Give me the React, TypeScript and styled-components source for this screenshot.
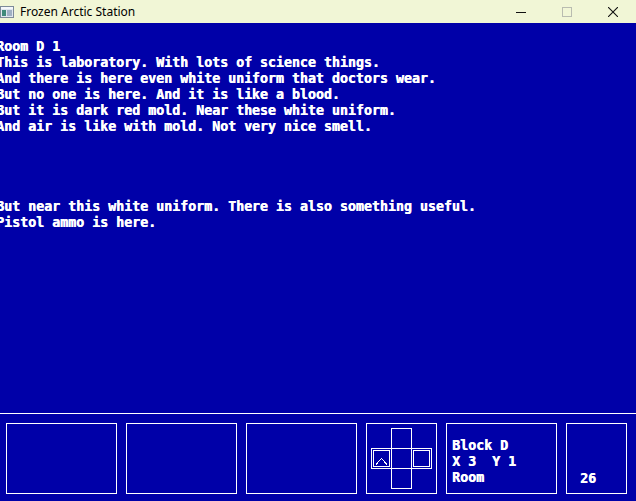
import React from "react";
import styled, { createGlobalStyle } from "styled-components";

const GlobalStyle = createGlobalStyle`
  html, body {
    margin: 0;
    padding: 0;
    overflow: hidden;
  }
`;

const storyLines = [
  "Room D 1",
  "This is laboratory. With lots of science things.",
  "And there is here even white uniform that doctors wear.",
  "But no one is here. And it is like a blood.",
  "But it is dark red mold. Near these white uniform.",
  "And air is like with mold. Not very nice smell.",
  "",
  "",
  "",
  "",
  "But near this white uniform. There is also something useful.",
  "Pistol ammo is here.",
];

const WindowIcon: React.FC = () => (
  <svg width="14" height="12" viewBox="0 0 14 12">
    <rect x="0.5" y="0.5" width="13" height="11" fill="#dfe6ee" stroke="#7d8a99" />
    <rect x="1" y="1" width="12" height="2" fill="#f4f7fb" />
    <rect x="2" y="4" width="4" height="6" fill="#3f8a7a" />
    <rect x="7" y="4" width="5" height="6" fill="#9fb0c4" />
  </svg>
);

const DPad: React.FC = () => (
  <svg width="69" height="69" viewBox="0 0 69 69" shapeRendering="crispEdges">
    <g fill="none" stroke="#fff" strokeWidth="1">
      <rect x="24.5" y="4.5" width="20" height="60" />
      <rect x="4.5" y="24.5" width="60" height="20" />
      <rect x="6.5" y="26.5" width="16" height="16" />
      <rect x="46.5" y="26.5" width="16" height="16" />
      <polyline points="9,40.5 14.5,34.5 20,40.5" />
    </g>
  </svg>
);

export default function App() {
  return (
    <>
      <GlobalStyle />
      <Window>
        <TitleBar>
          <IconSlot>
            <WindowIcon />
          </IconSlot>
          <Title>Frozen Arctic Station</Title>
          <Controls>
            <CtrlButton>
              <svg width="10" height="10" viewBox="0 0 10 10">
                <line x1="0" y1="5.5" x2="10" y2="5.5" stroke="#111" />
              </svg>
            </CtrlButton>
            <CtrlButton>
              <svg width="10" height="10" viewBox="0 0 10 10">
                <rect x="0.5" y="0.5" width="9" height="9" fill="none" stroke="#b9bcb0" />
              </svg>
            </CtrlButton>
            <CtrlButton>
              <svg width="10" height="10" viewBox="0 0 10 10">
                <path d="M0 0 L10 10 M10 0 L0 10" stroke="#111" strokeWidth="1.1" />
              </svg>
            </CtrlButton>
          </Controls>
        </TitleBar>
        <Screen>
          <Story>
            {storyLines.map((line, i) => (
              <Line key={i}>{line || " "}</Line>
            ))}
          </Story>
          <Panel>
            <Slot $w={111} />
            <Slot $w={111} />
            <Slot $w={111} />
            <Slot $w={71}>
              <DPad />
            </Slot>
            <InfoSlot $w={111}>
              <Line>Block D</Line>
              <Line>X 3  Y 1</Line>
              <Line>Room</Line>
            </InfoSlot>
            <CounterSlot $w={61}>
              <Line>26</Line>
            </CounterSlot>
          </Panel>
        </Screen>
      </Window>
    </>
  );
}

const Window = styled.div`
  width: 636px;
  height: 501px;
  display: flex;
  flex-direction: column;
  background: #0000a8;
`;

const TitleBar = styled.div`
  height: 23px;
  flex: none;
  display: flex;
  align-items: center;
  background: #f1f6d6;
  font-family: "Noto Sans", "Open Sans", sans-serif;
  font-size: 12px;
  color: #000;
`;

const IconSlot = styled.div`
  width: 20px;
  display: flex;
  justify-content: center;
  margin-left: -3px;
  margin-right: 3px;
`;

const Title = styled.div`
  flex: 1;
  line-height: 23px;
`;

const Controls = styled.div`
  display: flex;
  height: 23px;
`;

const CtrlButton = styled.div`
  width: 46px;
  display: flex;
  align-items: center;
  justify-content: center;
`;

const Screen = styled.div`
  flex: 1;
  display: flex;
  flex-direction: column;
  color: #fff;
  font-family: "DejaVu Sans Mono", "Liberation Mono", monospace;
  font-weight: bold;
  font-size: 13.29px;
  line-height: 16px;
  text-shadow: 0.5px 0 0 #fff;
`;

const Story = styled.div`
  height: 374px;
  padding-top: 16px;
  margin-left: -4px;
  overflow: hidden;
`;

const Line = styled.div`
  white-space: pre;
  height: 16px;
`;

const Panel = styled.div`
  flex: 1;
  border-top: 1px solid #fff;
  display: flex;
  gap: 9px;
  padding: 9px 0 0 6px;
`;

const Slot = styled.div<{ $w: number }>`
  box-sizing: border-box;
  width: ${(p) => p.$w}px;
  height: 71px;
  border: 1px solid #fff;
  flex: none;
`;

const InfoSlot = styled(Slot)`
  padding: 14px 0 0 5px;
`;

const CounterSlot = styled(Slot)`
  display: flex;
  flex-direction: column;
  justify-content: flex-end;
  padding: 0 0 6px 13px;
`;
